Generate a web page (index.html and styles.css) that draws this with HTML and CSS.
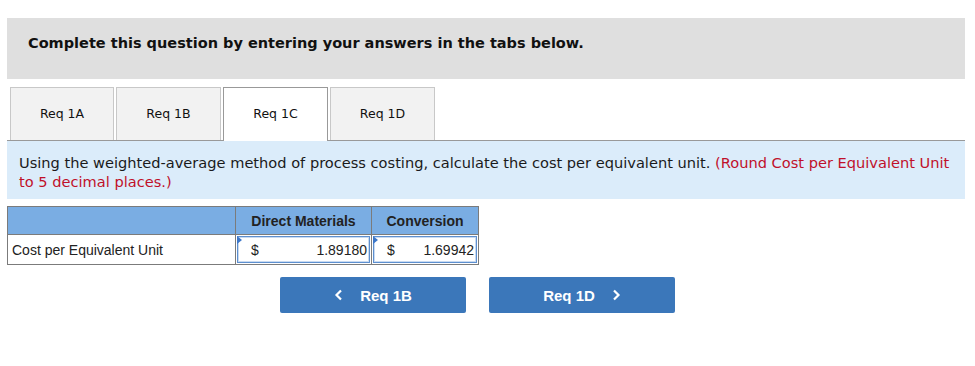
FILE: index.html
```html
<!DOCTYPE html>
<html>
<head>
<meta charset="utf-8">
<link rel="stylesheet" href="styles.css">
</head>
<body>
<div class="page">
  <div class="banner">Complete this question by entering your answers in the tabs below.</div>
  <div class="tabs">
    <div class="tab first">Req 1A</div>
    <div class="tab">Req 1B</div>
    <div class="tab active">Req 1C</div>
    <div class="tab">Req 1D</div>
  </div>
  <div class="prompt">Using the weighted-average method of process costing, calculate the cost per equivalent unit. <span class="red">(Round Cost per Equivalent Unit to 5 decimal places.)</span></div>
  <table class="grid">
    <colgroup>
      <col class="c1"><col class="c2"><col class="c3">
    </colgroup>
    <tr class="head">
      <th></th>
      <th>Direct Materials</th>
      <th>Conversion</th>
    </tr>
    <tr>
      <td class="label">Cost per Equivalent Unit</td>
      <td class="cell"><div class="inp"><span class="flag"></span><span>$</span><span>1.89180</span></div></td>
      <td class="cell"><div class="inp"><span class="flag"></span><span>$</span><span>1.69942</span></div></td>
    </tr>
  </table>
  <div class="nav">
    <div class="btn"><svg class="chev" width="10" height="12" viewBox="0 0 10 12"><path d="M7 1.5 L2.5 6 L7 10.5" fill="none" stroke="#fff" stroke-width="2.2"/></svg>Req 1B</div>
    <div class="btn">Req 1D<svg class="chev right" width="10" height="12" viewBox="0 0 10 12"><path d="M3 1.5 L7.5 6 L3 10.5" fill="none" stroke="#fff" stroke-width="2.2"/></svg></div>
  </div>
</div>
</body>
</html>
```
FILE: styles.css
```css
html, body { margin: 0; padding: 0; background: #fff; }
.page { padding: 18px 10px 0 7px; width: 958px; }
.banner {
  background: #dfdfdf;
  height: 61px;
  box-sizing: border-box;
  padding: 17px 0 0 21px;
  font-family: "DejaVu Sans", Verdana, sans-serif;
  font-weight: bold;
  font-size: 14.5px;
  color: #111;
}
.tabs {
  display: flex;
  gap: 2px;
  margin-top: 8px;
  padding-left: 3px;
  border-bottom: 1px solid #999;
  height: 53px;
}
.tab {
  width: 105px;
  height: 53px;
  box-sizing: border-box;
  border: 1px solid #c8c8c8;
  border-bottom: none;
  background: #f2f2f2;
  text-align: center;
  padding-top: 18px;
  font-family: "DejaVu Sans", Verdana, sans-serif;
  font-size: 12.5px;
  line-height: 15px;
  color: #111;
}
.tab.first { width: 104px; }
.tab.active {
  background: #fff;
  border-color: #999;
  height: 54px;
  margin-bottom: -1px;
}
.prompt {
  background: #dbecfa;
  height: 58px;
  box-sizing: border-box;
  padding: 12px 4px 0 12px;
  font-family: "DejaVu Sans", Verdana, sans-serif;
  font-size: 14.6px;
  line-height: 19px;
  color: #1a1a1a;
}
.red { color: #c0102a; }
.grid {
  margin-top: 7px;
  border-collapse: collapse;
  table-layout: fixed;
  width: 471px;
  font-family: "Liberation Sans", Arial, sans-serif;
  font-size: 14px;
  color: #222;
}
.c1 { width: 228px; }
.c2 { width: 136px; }
.c3 { width: 107px; }
.grid th, .grid td { border: 1px solid #7b7b7b; padding: 0; }
.head th {
  background: #7aade3;
  height: 27px;
  font-weight: bold;
  color: #222;
}
.label { height: 29px; padding-left: 4px !important; text-align: left; white-space: nowrap; }
.cell { padding: 1px !important; }
.inp {
  position: relative;
  height: 25px;
  border: 1px solid #5d8fcf;
  box-shadow: inset 0 0 0 1px #c9daf0;
  background: #fff;
  display: flex;
  justify-content: space-between;
  align-items: center;
  padding: 0 2px 0 13px;
}
.flag {
  position: absolute;
  left: -1px;
  top: -1px;
  width: 0;
  height: 0;
  border-top: 4px solid transparent;
  border-bottom: 4px solid transparent;
  border-left: 5px solid #3d77c9;
}
.nav {
  display: flex;
  gap: 23px;
  margin-top: 12px;
  padding-left: 273px;
}
.btn {
  width: 186px;
  height: 36px;
  background: #3b77ba;
  border-radius: 2px;
  display: flex;
  justify-content: center;
  align-items: center;
  gap: 16px;
  color: #fff;
  font-family: "Liberation Sans", Arial, sans-serif;
  font-weight: bold;
  font-size: 15px;
}
.chev { display: block; }
```
